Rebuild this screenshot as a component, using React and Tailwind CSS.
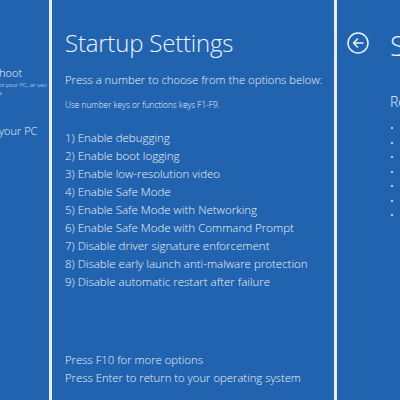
import React from 'react';

const options = [
  '1) Enable debugging',
  '2) Enable boot logging',
  '3) Enable low-resolution video',
  '4) Enable Safe Mode',
  '5) Enable Safe Mode with Networking',
  '6) Enable Safe Mode with Command Prompt',
  '7) Disable driver signature enforcement',
  '8) Disable early launch anti-malware protection',
  '9) Disable automatic restart after failure',
];

function Divider() {
  return <div className="w-[3px] shrink-0 bg-[#e4edf8]" />;
}

export default function App() {
  return (
    <div
      className="flex h-[400px] w-[400px] overflow-hidden bg-[#2163ae] text-[#eef3fa]"
      style={{ fontFamily: '"Open Sans", "Noto Sans", sans-serif' }}
    >
      {/* left panel: troubleshoot, clipped */}
      <div className="relative w-[49px] shrink-0 overflow-hidden">
        <div className="absolute right-[0px] top-[66px] w-[120px] text-left">
          <div className="ml-[70px] text-[11px] font-light leading-[14px]">hoot</div>
          <div className="ml-[70px] mt-[1px] text-[6px] font-light leading-[8px]">et your PC, or use</div>
          <div className="ml-[70px] text-[6px] font-light leading-[8px]">s</div>
          <div className="ml-[70px] mt-[27px] text-[11px] font-light leading-[14px]">your PC</div>
        </div>
      </div>

      <Divider />

      {/* middle panel */}
      <div className="flex w-[282px] shrink-0 flex-col pl-[13px] pt-[28px] pb-[13px]">
        <h1 className="text-[24px] font-light leading-[30px] tracking-[-0.2px] whitespace-nowrap">Startup Settings</h1>
        <p className="mt-[14px] text-[11.3px] font-light leading-[16px] whitespace-nowrap">
          Press a number to choose from the options below:
        </p>
        <p className="mt-[11px] text-[8.3px] font-light leading-[12px] whitespace-nowrap">
          Use number keys or functions keys F1-F9.
        </p>
        <ul className="mt-[18px] flex flex-col">
          {options.map((o) => (
            <li key={o} className="text-[11.5px] font-light leading-[18px] whitespace-nowrap">
              {o}
            </li>
          ))}
        </ul>
        <div className="mt-auto flex flex-col">
          <span className="text-[11.3px] font-light leading-[18px] whitespace-nowrap">Press F10 for more options</span>
          <span className="text-[11.3px] font-light leading-[18px] whitespace-nowrap">
            Press Enter to return to your operating system
          </span>
        </div>
      </div>

      <Divider />

      {/* right panel, clipped */}
      <div className="relative flex-1 overflow-hidden">
        <div className="flex items-start gap-[21px] pl-[10px] pt-[28px]">
          <svg width="22" height="22" viewBox="0 0 22 22" fill="none" stroke="currentColor" strokeWidth="1.5" className="mt-[4px] shrink-0">
            <circle cx="11" cy="11" r="10" />
            <path d="M16 11H6.5M10.5 7L6.5 11l4 4" strokeLinecap="round" strokeLinejoin="round" />
          </svg>
          <div className="flex flex-col">
            <span className="text-[28px] font-light leading-[34px] whitespace-nowrap">Startup</span>
            <span className="mt-[31px] text-[14px] font-light leading-[18px] whitespace-nowrap">Restart</span>
            <ul className="mt-[16px] flex flex-col gap-[12.5px] pl-[1px]">
              {[0, 1, 2, 3, 4, 5, 6].map((i) => (
                <li key={i} className="h-[2px] w-[2px] rounded-full bg-[#eef3fa]" />
              ))}
            </ul>
          </div>
        </div>
      </div>
    </div>
  );
}
